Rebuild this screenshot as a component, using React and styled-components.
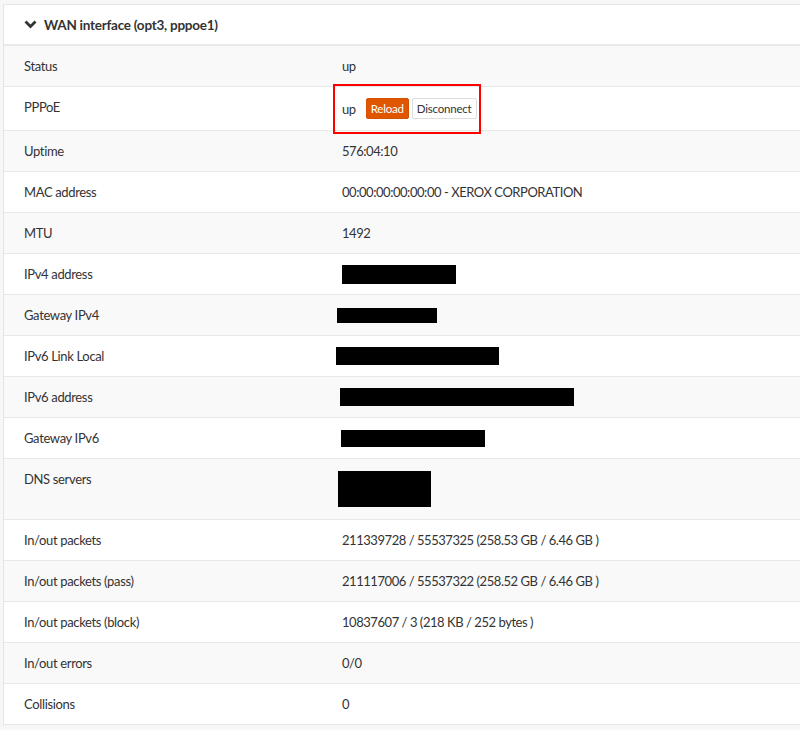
import React from "react";
import styled, { createGlobalStyle } from "styled-components";

const Global = createGlobalStyle`
  html, body { margin: 0; padding: 0; background: #f7f7f7; overflow: hidden; }
  body { font-family: "Source Sans Pro", Lato, "Noto Sans", sans-serif; color: #333; }
`;

const Page = styled.div`
  padding: 4px 0 0 3px;
  width: 800px;
  box-sizing: border-box;
`;

const Panel = styled.section`
  background: #fff;
  border: 1px solid #e5e5e5;
  border-right: none;
  width: 810px;
`;

const Header = styled.header`
  display: flex;
  align-items: center;
  gap: 7px;
  height: 39px;
  padding-left: 20px;
  border-bottom: 2px solid #e8e8e8;
  font-size: 13.5px;
  font-weight: 700;
  letter-spacing: -0.25px;
  color: #333;
`;

const Table = styled.div`
  display: grid;
  grid-template-columns: 318px 1fr;
`;

const Row = styled.div`
  display: contents;
  & > div {
    background: ${(p) => (p.$odd ? "#f9f9f9" : "#fff")};
    border-top: ${(p) => (p.$first ? "none" : "1px solid #e8e8e8")};
  }
`;

const Label = styled.div`
  padding: 10px 0 10px 20px;
  font-size: 13px;
  letter-spacing: -0.35px;
  line-height: 20px;
`;

const Value = styled.div`
  padding: 10px 0 10px 20px;
  font-size: 13px;
  letter-spacing: -0.45px;
  line-height: 20px;
  display: flex;
  align-items: ${(p) => (p.$top ? "flex-start" : "center")};
`;

const Marked = styled.span`
  position: relative;
  display: inline-flex;
  align-items: center;
  gap: 10px;
  &::after {
    content: "";
    position: absolute;
    left: -9px;
    top: -13px;
    right: -4px;
    bottom: -14px;
    border: 2px solid #f00;
  }
`;

const BtnGroup = styled.span`
  display: inline-flex;
  gap: 3px;
`;

const Btn = styled.span`
  display: inline-flex;
  align-items: center;
  height: 21px;
  padding: 0 4px;
  margin: 1px 0;
  border-radius: 2px;
  font-size: 11.5px;
  letter-spacing: -0.2px;
  box-sizing: border-box;
  background: ${(p) => (p.$primary ? "#e05600" : "#fff")};
  color: ${(p) => (p.$primary ? "#fff" : "#333")};
  border: 1px solid ${(p) => (p.$primary ? "#d45100" : "#ddd")};
`;

const RedactBox = styled.div`
  min-height: ${(p) => (p.$tall ? 40 : 20)}px;
  display: flex;
  align-items: ${(p) => (p.$top ? "flex-start" : "center")};
`;

const Redact = styled.span`
  display: block;
  background: #000;
  width: ${(p) => p.$w}px;
  height: ${(p) => p.$h}px;
  margin-left: ${(p) => p.$dx}px;
  margin-top: ${(p) => p.$dy || 0}px;
`;

const Chevron = () => (
  <svg width="13" height="9" viewBox="0 0 13 9">
    <path d="M1.5 1.5 L6.5 6.5 L11.5 1.5" fill="none" stroke="#333" strokeWidth="2.8" />
  </svg>
);

const rows = [
  ["Status", "up"],
  ["PPPoE", "pppoe"],
  ["Uptime", "576:04:10"],
  ["MAC address", "00:00:00:00:00:00 - XEROX CORPORATION"],
  ["MTU", "1492"],
  ["IPv4 address", { dx: 0, w: 114, h: 19 }],
  ["Gateway IPv4", { dx: -5, w: 100, h: 15 }],
  ["IPv6 Link Local", { dx: -6, w: 163, h: 18 }],
  ["IPv6 address", { dx: -2, w: 234, h: 18 }],
  ["Gateway IPv6", { dx: -1, w: 144, h: 17 }],
  ["DNS servers", { dx: -4, w: 93, h: 36, dy: 2, top: true, tall: true }],
  ["In/out packets", "211339728 / 55537325 (258.53 GB / 6.46 GB )"],
  ["In/out packets (pass)", "211117006 / 55537322 (258.52 GB / 6.46 GB )"],
  ["In/out packets (block)", "10837607 / 3 (218 KB / 252 bytes )"],
  ["In/out errors", "0/0"],
  ["Collisions", "0"],
];

export default function App() {
  return (
    <Page>
      <Global />
      <Panel>
        <Header>
          <Chevron />
          WAN interface (opt3, pppoe1)
        </Header>
        <Table>
          {rows.map(([label, val], i) => (
            <Row key={label} $odd={i % 2 === 0} $first={i === 0}>
              <Label>{label}</Label>
              <Value $top={typeof val === "object" && val.top}>
                {val === "pppoe" ? (
                  <Marked>
                    up
                    <BtnGroup>
                      <Btn $primary>Reload</Btn>
                      <Btn>Disconnect</Btn>
                    </BtnGroup>
                  </Marked>
                ) : typeof val === "object" ? (
                  <RedactBox $tall={val.tall} $top={val.top}>
                    <Redact $w={val.w} $h={val.h} $dx={val.dx} $dy={val.dy} />
                  </RedactBox>
                ) : (
                  val
                )}
              </Value>
            </Row>
          ))}
        </Table>
      </Panel>
    </Page>
  );
}
